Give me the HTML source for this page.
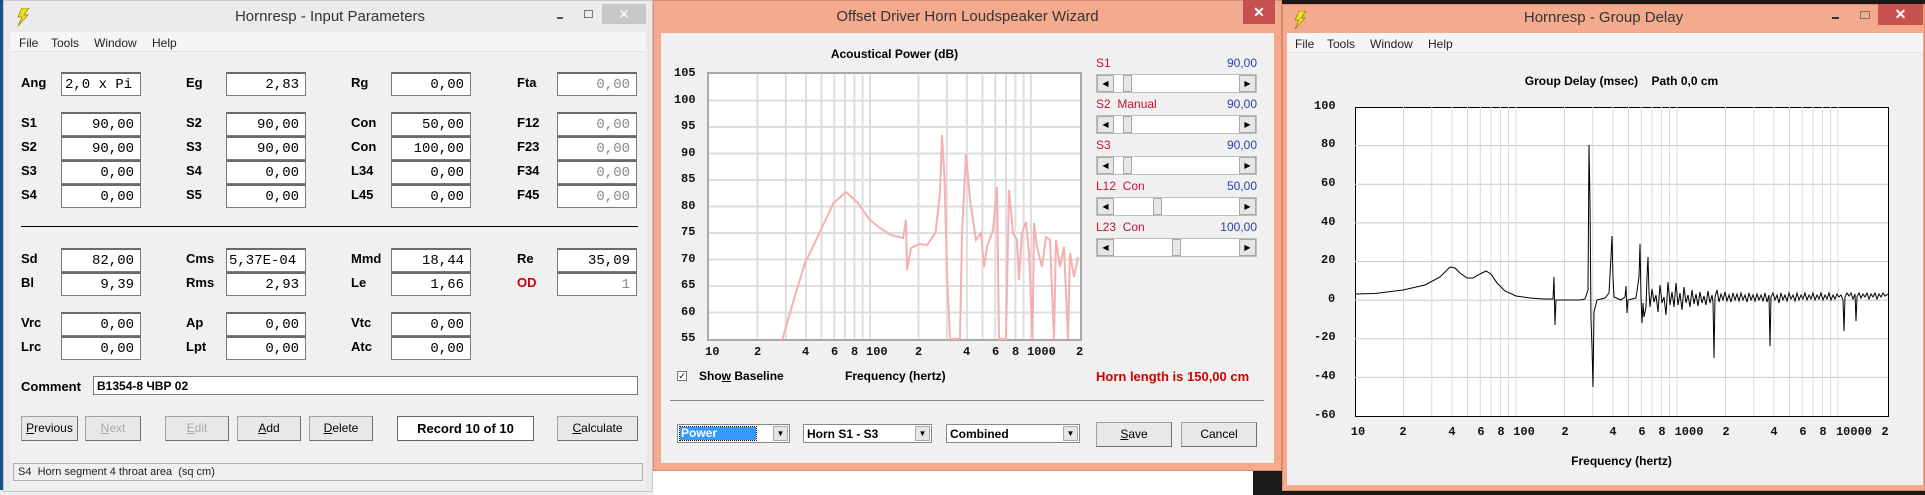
<!DOCTYPE html>
<html><head><meta charset="utf-8"><style>
*{margin:0;padding:0;box-sizing:border-box}
body{width:1925px;height:495px;overflow:hidden;background:#1a1a1a;position:relative;font-family:"Liberation Sans",sans-serif}
.a{position:absolute}
.lbl{position:absolute;font:bold 13px "Liberation Sans Narrow","Liberation Sans",sans-serif;color:#000}
.box{position:absolute;width:80px;height:24px;background:#fff;border:1px solid #7a7a7a;border-top:2px solid #6a6a6a;font:14px "Liberation Mono",monospace;text-align:right;padding:3px 6px 0 0;color:#000}
.g{color:#8a8a8a}
.btn{position:absolute;height:25px;background:#e8e8e8;border:1px solid #a0a0a0;border-right-color:#707070;border-bottom-color:#707070;font:12px "Liberation Sans Narrow","Liberation Sans",sans-serif;text-align:center;line-height:23px;color:#000}
.menu{position:absolute;font:12px "Liberation Sans",sans-serif;color:#222}
.ax{position:absolute;font:bold 12px "Liberation Mono",monospace;color:#111}
.xc{position:absolute;font:bold 12px "Liberation Mono",monospace;color:#111;width:40px;margin-left:-20px;text-align:center}
.sl{position:absolute;left:1096px;width:161px;height:19px;background:#fff;border:1px solid #bdbdbd}
.sl .ar{position:absolute;top:0;width:17px;height:17px;background:#e6e6e6;border:1px solid #a8a8a8;font-size:8px;text-align:center;line-height:16px}
.sl .th{position:absolute;top:0;width:9px;height:17px;background:#e6e6e6;border:1px solid #a8a8a8}
.rl{position:absolute;left:1096px;font:12px "Liberation Sans Narrow","Liberation Sans",sans-serif;color:#c8102e}
.bl{position:absolute;right:668px;font:12px "Liberation Sans Narrow","Liberation Sans",sans-serif;color:#2a3fa8}
</style></head><body>
<div class="a" style="left:0;top:0;width:10px;height:495px;background:#1d4f8a"></div>
<div class="a" style="left:653px;top:471px;width:600px;height:24px;background:#fff"></div>
<div class="a" style="left:0;top:490px;width:653px;height:5px;background:#eee"></div>

<!-- Window 1 -->
<div class="a" style="left:3px;top:0;width:650px;height:492px;background:#ebebeb;border:1px solid #c8c8c8"></div>
<svg class="a" style="left:16px;top:8px" width="14" height="18"><polygon points="6,0 13,0 8,7 12,7 2,18 6,9 2,9" fill="#f0e020" stroke="#8a7a00" stroke-width="0.7"/></svg>
<div class="a" style="left:0;top:8px;width:660px;text-align:center;font:15px 'Liberation Sans',sans-serif;color:#333">Hornresp - Input Parameters</div>
<div class="a" style="left:557px;top:17px;width:6px;height:2px;background:#555"></div>
<div class="a" style="left:584px;top:10px;width:9px;height:8px;border:1px solid #777"></div>
<div class="a" style="left:602px;top:4px;width:44px;height:20px;background:#c7c7c7;color:#fff;text-align:center;font:14px sans-serif;line-height:20px">✕</div>
<div class="a" style="left:10px;top:32px;width:636px;height:456px;background:#f0f0f0"></div>
<div class="a" style="left:10px;top:32px;width:636px;height:20px;background:#f5f5f5;border-bottom:1px solid #e2e2e2"></div>
<div class="menu" style="left:19px;top:36px">File</div><div class="menu" style="left:51px;top:36px">Tools</div><div class="menu" style="left:94px;top:36px">Window</div><div class="menu" style="left:152px;top:36px">Help</div>

<div class="lbl" style="left:21px;top:75px">Ang</div><div class="box" style="left:61px;top:72px;text-align:left;padding-left:3px">2,0 x Pi</div>
<div class="lbl" style="left:186px;top:75px">Eg</div><div class="box" style="left:226px;top:72px">2,83</div>
<div class="lbl" style="left:351px;top:75px">Rg</div><div class="box" style="left:391px;top:72px">0,00</div>
<div class="lbl" style="left:517px;top:75px">Fta</div><div class="box g" style="left:557px;top:72px">0,00</div>

<div class="lbl" style="left:21px;top:115px">S1</div><div class="box" style="left:61px;top:112px">90,00</div>
<div class="lbl" style="left:186px;top:115px">S2</div><div class="box" style="left:226px;top:112px">90,00</div>
<div class="lbl" style="left:351px;top:115px">Con</div><div class="box" style="left:391px;top:112px">50,00</div>
<div class="lbl" style="left:517px;top:115px">F12</div><div class="box g" style="left:557px;top:112px">0,00</div>

<div class="lbl" style="left:21px;top:139px">S2</div><div class="box" style="left:61px;top:136px">90,00</div>
<div class="lbl" style="left:186px;top:139px">S3</div><div class="box" style="left:226px;top:136px">90,00</div>
<div class="lbl" style="left:351px;top:139px">Con</div><div class="box" style="left:391px;top:136px">100,00</div>
<div class="lbl" style="left:517px;top:139px">F23</div><div class="box g" style="left:557px;top:136px">0,00</div>

<div class="lbl" style="left:21px;top:163px">S3</div><div class="box" style="left:61px;top:160px">0,00</div>
<div class="lbl" style="left:186px;top:163px">S4</div><div class="box" style="left:226px;top:160px">0,00</div>
<div class="lbl" style="left:351px;top:163px">L34</div><div class="box" style="left:391px;top:160px">0,00</div>
<div class="lbl" style="left:517px;top:163px">F34</div><div class="box g" style="left:557px;top:160px">0,00</div>

<div class="lbl" style="left:21px;top:187px">S4</div><div class="box" style="left:61px;top:184px">0,00</div>
<div class="lbl" style="left:186px;top:187px">S5</div><div class="box" style="left:226px;top:184px">0,00</div>
<div class="lbl" style="left:351px;top:187px">L45</div><div class="box" style="left:391px;top:184px">0,00</div>
<div class="lbl" style="left:517px;top:187px">F45</div><div class="box g" style="left:557px;top:184px">0,00</div>

<div class="a" style="left:21px;top:226px;width:617px;height:1px;background:#000"></div>

<div class="lbl" style="left:21px;top:251px">Sd</div><div class="box" style="left:61px;top:248px">82,00</div>
<div class="lbl" style="left:186px;top:251px">Cms</div><div class="box" style="left:226px;top:248px;text-align:left;padding-left:2px">5,37E-04</div>
<div class="lbl" style="left:351px;top:251px">Mmd</div><div class="box" style="left:391px;top:248px">18,44</div>
<div class="lbl" style="left:517px;top:251px">Re</div><div class="box" style="left:557px;top:248px">35,09</div>

<div class="lbl" style="left:21px;top:275px">Bl</div><div class="box" style="left:61px;top:272px">9,39</div>
<div class="lbl" style="left:186px;top:275px">Rms</div><div class="box" style="left:226px;top:272px">2,93</div>
<div class="lbl" style="left:351px;top:275px">Le</div><div class="box" style="left:391px;top:272px">1,66</div>
<div class="lbl" style="left:517px;top:275px;color:#d00000">OD</div><div class="box g" style="left:557px;top:272px">1</div>

<div class="lbl" style="left:21px;top:315px">Vrc</div><div class="box" style="left:61px;top:312px">0,00</div>
<div class="lbl" style="left:186px;top:315px">Ap</div><div class="box" style="left:226px;top:312px">0,00</div>
<div class="lbl" style="left:351px;top:315px">Vtc</div><div class="box" style="left:391px;top:312px">0,00</div>

<div class="lbl" style="left:21px;top:339px">Lrc</div><div class="box" style="left:61px;top:336px">0,00</div>
<div class="lbl" style="left:186px;top:339px">Lpt</div><div class="box" style="left:226px;top:336px">0,00</div>
<div class="lbl" style="left:351px;top:339px">Atc</div><div class="box" style="left:391px;top:336px">0,00</div>

<div class="lbl" style="left:21px;top:379px">Comment</div>
<div class="a" style="left:93px;top:376px;width:545px;height:19px;background:#fff;border:1px solid #7a7a7a;font:bold 12px 'Liberation Sans Narrow','Liberation Sans',sans-serif;padding:2px 3px">B1354-8 ЧВР 02</div>

<div class="btn" style="left:21px;top:416px;width:57px"><u>P</u>revious</div>
<div class="btn" style="left:85px;top:416px;width:56px;color:#a8a8a8"><u>N</u>ext</div>
<div class="btn" style="left:165px;top:416px;width:64px;color:#a8a8a8"><u>E</u>dit</div>
<div class="btn" style="left:237px;top:416px;width:64px"><u>A</u>dd</div>
<div class="btn" style="left:309px;top:416px;width:64px"><u>D</u>elete</div>
<div class="a" style="left:397px;top:416px;width:137px;height:25px;background:#fff;border:1px solid #666;text-align:center;font:bold 13px 'Liberation Sans Narrow','Liberation Sans',sans-serif;line-height:23px">Record 10 of 10</div>
<div class="btn" style="left:557px;top:416px;width:81px"><u>C</u>alculate</div>
<div class="a" style="left:13px;top:463px;width:630px;height:18px;border:1px solid #b0b0b0;background:#f0f0f0;font:11px 'Liberation Sans Narrow','Liberation Sans',sans-serif;padding:2px 4px;color:#222">S4&nbsp;&nbsp;Horn segment 4 throat area&nbsp;&nbsp;(sq cm)</div>

<!-- Wizard -->
<div class="a" style="left:653px;top:0;width:629px;height:471px;background:#f4aa8c;border:1px solid #d98a6c"></div>
<div class="a" style="left:653px;top:8px;width:629px;text-align:center;font:15px 'Liberation Sans',sans-serif;color:#333">Offset Driver Horn Loudspeaker Wizard</div>
<div class="a" style="left:1243px;top:0;width:32px;height:24px;background:#c75050;color:#fff;text-align:center;font:bold 14px sans-serif;line-height:24px">✕</div>
<div class="a" style="left:661px;top:33px;width:613px;height:430px;background:#f0f0f0"></div>
<div class="a" style="left:709px;top:47px;width:371px;text-align:center;font:bold 12px 'Liberation Sans',sans-serif">Acoustical Power (dB)</div>
<svg class="a" style="left:707px;top:72px" width="375" height="269">
<rect x="1" y="1" width="373" height="267" fill="#fff" stroke="#a8a8a8" stroke-width="2"/>
<g stroke="#dedede" stroke-width="2">
<line x1="2" y1="28.5" x2="373" y2="28.5"/><line x1="2" y1="55" x2="373" y2="55"/><line x1="2" y1="81.5" x2="373" y2="81.5"/><line x1="2" y1="108" x2="373" y2="108"/><line x1="2" y1="134.5" x2="373" y2="134.5"/><line x1="2" y1="161" x2="373" y2="161"/><line x1="2" y1="187.5" x2="373" y2="187.5"/><line x1="2" y1="214" x2="373" y2="214"/><line x1="2" y1="240.5" x2="373" y2="240.5"/>
<line x1="50.5" y1="2" x2="50.5" y2="267"/><line x1="78.8" y1="2" x2="78.8" y2="267"/><line x1="98.9" y1="2" x2="98.9" y2="267"/><line x1="114.5" y1="2" x2="114.5" y2="267"/><line x1="127.3" y1="2" x2="127.3" y2="267"/><line x1="138" y1="2" x2="138" y2="267"/><line x1="147.4" y1="2" x2="147.4" y2="267"/><line x1="155.6" y1="2" x2="155.6" y2="267"/><line x1="163" y1="2" x2="163" y2="267"/>
<line x1="211.5" y1="2" x2="211.5" y2="267"/><line x1="239.8" y1="2" x2="239.8" y2="267"/><line x1="259.9" y1="2" x2="259.9" y2="267"/><line x1="275.5" y1="2" x2="275.5" y2="267"/><line x1="288.3" y1="2" x2="288.3" y2="267"/><line x1="299" y1="2" x2="299" y2="267"/><line x1="308.4" y1="2" x2="308.4" y2="267"/><line x1="316.6" y1="2" x2="316.6" y2="267"/><line x1="324" y1="2" x2="324" y2="267"/>
</g>
<polyline transform="translate(2,2)" fill="none" stroke="#f4b0b0" stroke-width="2" points="73.5,265 85,225 96,189 110,160 124.5,129 137,118 149,129 160,145 169.5,153 182,161 194,164 197,146 198,196 202,174 210,170 218,171 226.5,159 231,119 233,61 235.5,103 238,200 241,265 251,265 253,159 257,80 261,126 267,166 272,159 275,193 278,173 284,156 288,113 290,265 297,265 300,116 304,159 308,166 310,206 313,159 317,148 320,179 323.5,265 325,149 328,173 333,193 337,163 341,166 345,265 347,166 351,193 355,173 359,265 361,179 365,203 369,183"/>
</svg>
<div class="ax" style="left:674px;top:66px">105</div><div class="ax" style="left:674px;top:93px">100</div><div class="ax" style="left:681px;top:119px">95</div><div class="ax" style="left:681px;top:146px">90</div><div class="ax" style="left:681px;top:172px">85</div><div class="ax" style="left:681px;top:199px">80</div><div class="ax" style="left:681px;top:225px">75</div><div class="ax" style="left:681px;top:252px">70</div><div class="ax" style="left:681px;top:278px">65</div><div class="ax" style="left:681px;top:305px">60</div><div class="ax" style="left:681px;top:331px">55</div>
<div class="ax" style="left:705px;top:345px">10</div><div class="ax" style="left:754px;top:345px">2</div><div class="ax" style="left:802px;top:345px">4</div><div class="ax" style="left:831px;top:345px">6</div><div class="ax" style="left:851px;top:345px">8</div><div class="ax" style="left:866px;top:345px">100</div><div class="ax" style="left:915px;top:345px">2</div><div class="ax" style="left:963px;top:345px">4</div><div class="ax" style="left:992px;top:345px">6</div><div class="ax" style="left:1012px;top:345px">8</div><div class="ax" style="left:1027px;top:345px">1000</div><div class="ax" style="left:1076px;top:345px">2</div>
<div class="a" style="left:677px;top:371px;width:10px;height:10px;background:#fff;border:1px solid #777;font:9px sans-serif;line-height:9px;text-align:center">✓</div>
<div class="a" style="left:699px;top:369px;font:bold 12px 'Liberation Sans',sans-serif">Sho<u>w</u> Baseline</div>
<div class="a" style="left:845px;top:369px;font:bold 12px 'Liberation Sans',sans-serif">Frequency (hertz)</div>
<div class="a" style="left:1096px;top:369px;font:bold 13px 'Liberation Sans Narrow','Liberation Sans',sans-serif;color:#d00000">Horn length is 150,00 cm</div>

<div class="rl" style="top:56px">S1</div><div class="bl" style="top:56px">90,00</div>
<div class="sl" style="top:74px"><div class="ar" style="left:0">◀</div><div class="th" style="left:26px"></div><div class="ar" style="right:0">▶</div></div>
<div class="rl" style="top:97px">S2&nbsp; Manual</div><div class="bl" style="top:97px">90,00</div>
<div class="sl" style="top:115px"><div class="ar" style="left:0">◀</div><div class="th" style="left:26px"></div><div class="ar" style="right:0">▶</div></div>
<div class="rl" style="top:138px">S3</div><div class="bl" style="top:138px">90,00</div>
<div class="sl" style="top:156px"><div class="ar" style="left:0">◀</div><div class="th" style="left:26px"></div><div class="ar" style="right:0">▶</div></div>
<div class="rl" style="top:179px">L12&nbsp; Con</div><div class="bl" style="top:179px">50,00</div>
<div class="sl" style="top:197px"><div class="ar" style="left:0">◀</div><div class="th" style="left:56px"></div><div class="ar" style="right:0">▶</div></div>
<div class="rl" style="top:220px">L23&nbsp; Con</div><div class="bl" style="top:220px">100,00</div>
<div class="sl" style="top:238px"><div class="ar" style="left:0">◀</div><div class="th" style="left:75px"></div><div class="ar" style="right:0">▶</div></div>

<div class="a" style="left:670px;top:400px;width:594px;height:1px;background:#888"></div>
<div class="a" style="left:677px;top:424px;width:113px;height:19px;background:#fff;border:1px solid #888"><div class="a" style="left:2px;top:2px;width:76px;height:13px;background:#3399ff;color:#fff;font:bold 12px 'Liberation Sans',sans-serif;line-height:13px;padding-left:1px;outline:1px dotted #000">Power</div><div class="a" style="right:1px;top:1px;width:15px;height:15px;background:#e6e6e6;border:1px solid #aaa;font-size:8px;text-align:center;line-height:14px">▼</div></div>
<div class="a" style="left:803px;top:424px;width:129px;height:19px;background:#fff;border:1px solid #888;font:bold 12px 'Liberation Sans',sans-serif;padding:2px 3px">Horn S1 - S3<div class="a" style="right:1px;top:1px;width:15px;height:15px;background:#e6e6e6;border:1px solid #aaa;font-size:8px;text-align:center;line-height:14px">▼</div></div>
<div class="a" style="left:946px;top:424px;width:134px;height:19px;background:#fff;border:1px solid #888;font:bold 12px 'Liberation Sans',sans-serif;padding:2px 3px">Combined<div class="a" style="right:1px;top:1px;width:15px;height:15px;background:#e6e6e6;border:1px solid #aaa;font-size:8px;text-align:center;line-height:14px">▼</div></div>
<div class="btn" style="left:1096px;top:422px;width:76px"><u>S</u>ave</div>
<div class="btn" style="left:1181px;top:422px;width:76px">Cancel</div>

<!-- Group delay window -->
<div class="a" style="left:1282px;top:4px;width:643px;height:487px;background:#f4aa8c;border:1px solid #d98a6c"></div>
<svg class="a" style="left:1293px;top:11px" width="14" height="18"><polygon points="6,0 13,0 8,7 12,7 2,18 6,9 2,9" fill="#f0e020" stroke="#8a7a00" stroke-width="0.7"/></svg>
<div class="a" style="left:1282px;top:9px;width:643px;text-align:center;font:15px 'Liberation Sans',sans-serif;color:#333">Hornresp - Group Delay</div>
<div class="a" style="left:1832px;top:17px;width:7px;height:2px;background:#333"></div>
<div class="a" style="left:1860px;top:11px;width:10px;height:8px;border:1px solid #777"></div>
<div class="a" style="left:1878px;top:4px;width:45px;height:21px;background:#c75050;color:#fff;text-align:center;font:bold 14px sans-serif;line-height:21px">✕</div>
<div class="a" style="left:1287px;top:33px;width:636px;height:452px;background:#f0f0f0"></div>
<div class="a" style="left:1287px;top:33px;width:636px;height:20px;background:#f5f5f5;border-bottom:1px solid #e2e2e2"></div>
<div class="menu" style="left:1295px;top:37px">File</div><div class="menu" style="left:1327px;top:37px">Tools</div><div class="menu" style="left:1370px;top:37px">Window</div><div class="menu" style="left:1428px;top:37px">Help</div>
<div class="a" style="left:1355px;top:74px;width:533px;text-align:center;font:bold 12px 'Liberation Sans',sans-serif">Group Delay (msec)&nbsp;&nbsp;&nbsp; Path 0,0 cm</div>
<svg class="a" style="left:1355px;top:107px" width="534" height="310">
<rect x="0.5" y="0.5" width="533" height="309" fill="#fff" stroke="#000" stroke-width="1"/>
<g stroke="#c8c8c8" stroke-width="1">
<line x1="0" y1="38.6" x2="533" y2="38.6"/><line x1="0" y1="77.2" x2="533" y2="77.2"/><line x1="0" y1="115.9" x2="533" y2="115.9"/><line x1="0" y1="154.5" x2="533" y2="154.5"/><line x1="0" y1="193.1" x2="533" y2="193.1"/><line x1="0" y1="231.8" x2="533" y2="231.8"/><line x1="0" y1="270.4" x2="533" y2="270.4"/>
</g>
<g stroke="#d8d8d8" stroke-width="1">
<line x1="48.5" y1="0" x2="48.5" y2="309"/><line x1="76.8" y1="0" x2="76.8" y2="309"/><line x1="96.9" y1="0" x2="96.9" y2="309"/><line x1="112.5" y1="0" x2="112.5" y2="309"/><line x1="125.3" y1="0" x2="125.3" y2="309"/><line x1="136" y1="0" x2="136" y2="309"/><line x1="145.4" y1="0" x2="145.4" y2="309"/><line x1="153.6" y1="0" x2="153.6" y2="309"/><line x1="161" y1="0" x2="161" y2="309"/>
<line x1="209.5" y1="0" x2="209.5" y2="309"/><line x1="237.8" y1="0" x2="237.8" y2="309"/><line x1="257.9" y1="0" x2="257.9" y2="309"/><line x1="273.5" y1="0" x2="273.5" y2="309"/><line x1="286.3" y1="0" x2="286.3" y2="309"/><line x1="297" y1="0" x2="297" y2="309"/><line x1="306.4" y1="0" x2="306.4" y2="309"/><line x1="314.6" y1="0" x2="314.6" y2="309"/><line x1="322" y1="0" x2="322" y2="309"/>
<line x1="370.5" y1="0" x2="370.5" y2="309"/><line x1="398.8" y1="0" x2="398.8" y2="309"/><line x1="418.9" y1="0" x2="418.9" y2="309"/><line x1="434.5" y1="0" x2="434.5" y2="309"/><line x1="447.3" y1="0" x2="447.3" y2="309"/><line x1="458" y1="0" x2="458" y2="309"/><line x1="467.4" y1="0" x2="467.4" y2="309"/><line x1="475.6" y1="0" x2="475.6" y2="309"/><line x1="483" y1="0" x2="483" y2="309"/>
</g>
<polyline fill="none" stroke="#000" stroke-width="1" points="0,187 20,186.5 48,183 70,178 85,170 95,160 100,161 105,166 112,171 118,171 125,167 131,164 136,167 142,176 150,184 161,189 175,191 189,192 198,192 199,170 200,218 201,193 225,193 230,192 233,183 234,38 235,96 236,212 237,240 238,280 239,205 242,193 250,191 254,186 256,150 257,129 258,170 259,190 266,193 270,190 271,179 272,206 273,193 281,191 284,170 285,137 286,190 287,216 288,196 289,210 291,200 292,170 293,150 294,185 295,200 297,182 299,195 301,188 303,205 305,178 307,196 309,190 311,208 313,175 315,198 317,185 319,200 321,176 323,198 325,186 327,203 329,180 331,196 333,188 335,200 337,183 339,197 341,187 343,199 345,185 347,196 349,189 351,198 353,184 355,196 357,188 358,195 359,251 360,190 362,183 364,195 366,187 368,193 370,185 372,194 374,188 376,195 378,186 380,193 382,187 384,194 386,186 388,193 390,188 392,195 394,186 396,193 398,188 400,194 402,187 404,193 406,188 408,194 410,186 412,195 414,188 415,239 416,190 418,186 420,193 422,188 424,196 426,186 428,193 430,188 432,194 434,186 436,192 438,188 440,194 442,186 444,193 446,188 448,192 450,186 452,193 454,188 456,192 458,186 460,193 462,188 464,192 466,186 468,193 470,188 472,192 474,186 476,193 478,188 480,192 482,187 484,190 486,188 488,193 489,224 490,190 492,186 494,189 496,186 498,192 500,187 501,214 502,190 504,186 506,191 508,187 510,190 512,186 514,192 516,187 518,190 520,186 522,192 524,187 526,190 528,186 530,189 533,187"/>
</svg>
<div class="ax" style="left:1314px;top:99px">100</div><div class="ax" style="left:1321px;top:137px">80</div><div class="ax" style="left:1321px;top:176px">60</div><div class="ax" style="left:1321px;top:215px">40</div><div class="ax" style="left:1321px;top:253px">20</div><div class="ax" style="left:1328px;top:292px">0</div><div class="ax" style="left:1314px;top:330px">-20</div><div class="ax" style="left:1314px;top:369px">-40</div><div class="ax" style="left:1314px;top:408px">-60</div>
<div class="xc" style="left:1358px;top:425px">10</div><div class="xc" style="left:1403px;top:425px">2</div><div class="xc" style="left:1452px;top:425px">4</div><div class="xc" style="left:1481px;top:425px">6</div><div class="xc" style="left:1501px;top:425px">8</div><div class="xc" style="left:1524px;top:425px">100</div><div class="xc" style="left:1565px;top:425px">2</div><div class="xc" style="left:1613px;top:425px">4</div><div class="xc" style="left:1642px;top:425px">6</div><div class="xc" style="left:1662px;top:425px">8</div><div class="xc" style="left:1689px;top:425px">1000</div><div class="xc" style="left:1726px;top:425px">2</div><div class="xc" style="left:1774px;top:425px">4</div><div class="xc" style="left:1803px;top:425px">6</div><div class="xc" style="left:1823px;top:425px">8</div><div class="xc" style="left:1854px;top:425px">10000</div><div class="xc" style="left:1885px;top:425px">2</div>
<div class="a" style="left:1355px;top:454px;width:533px;text-align:center;font:bold 12px 'Liberation Sans',sans-serif">Frequency (hertz)</div>
</body></html>
